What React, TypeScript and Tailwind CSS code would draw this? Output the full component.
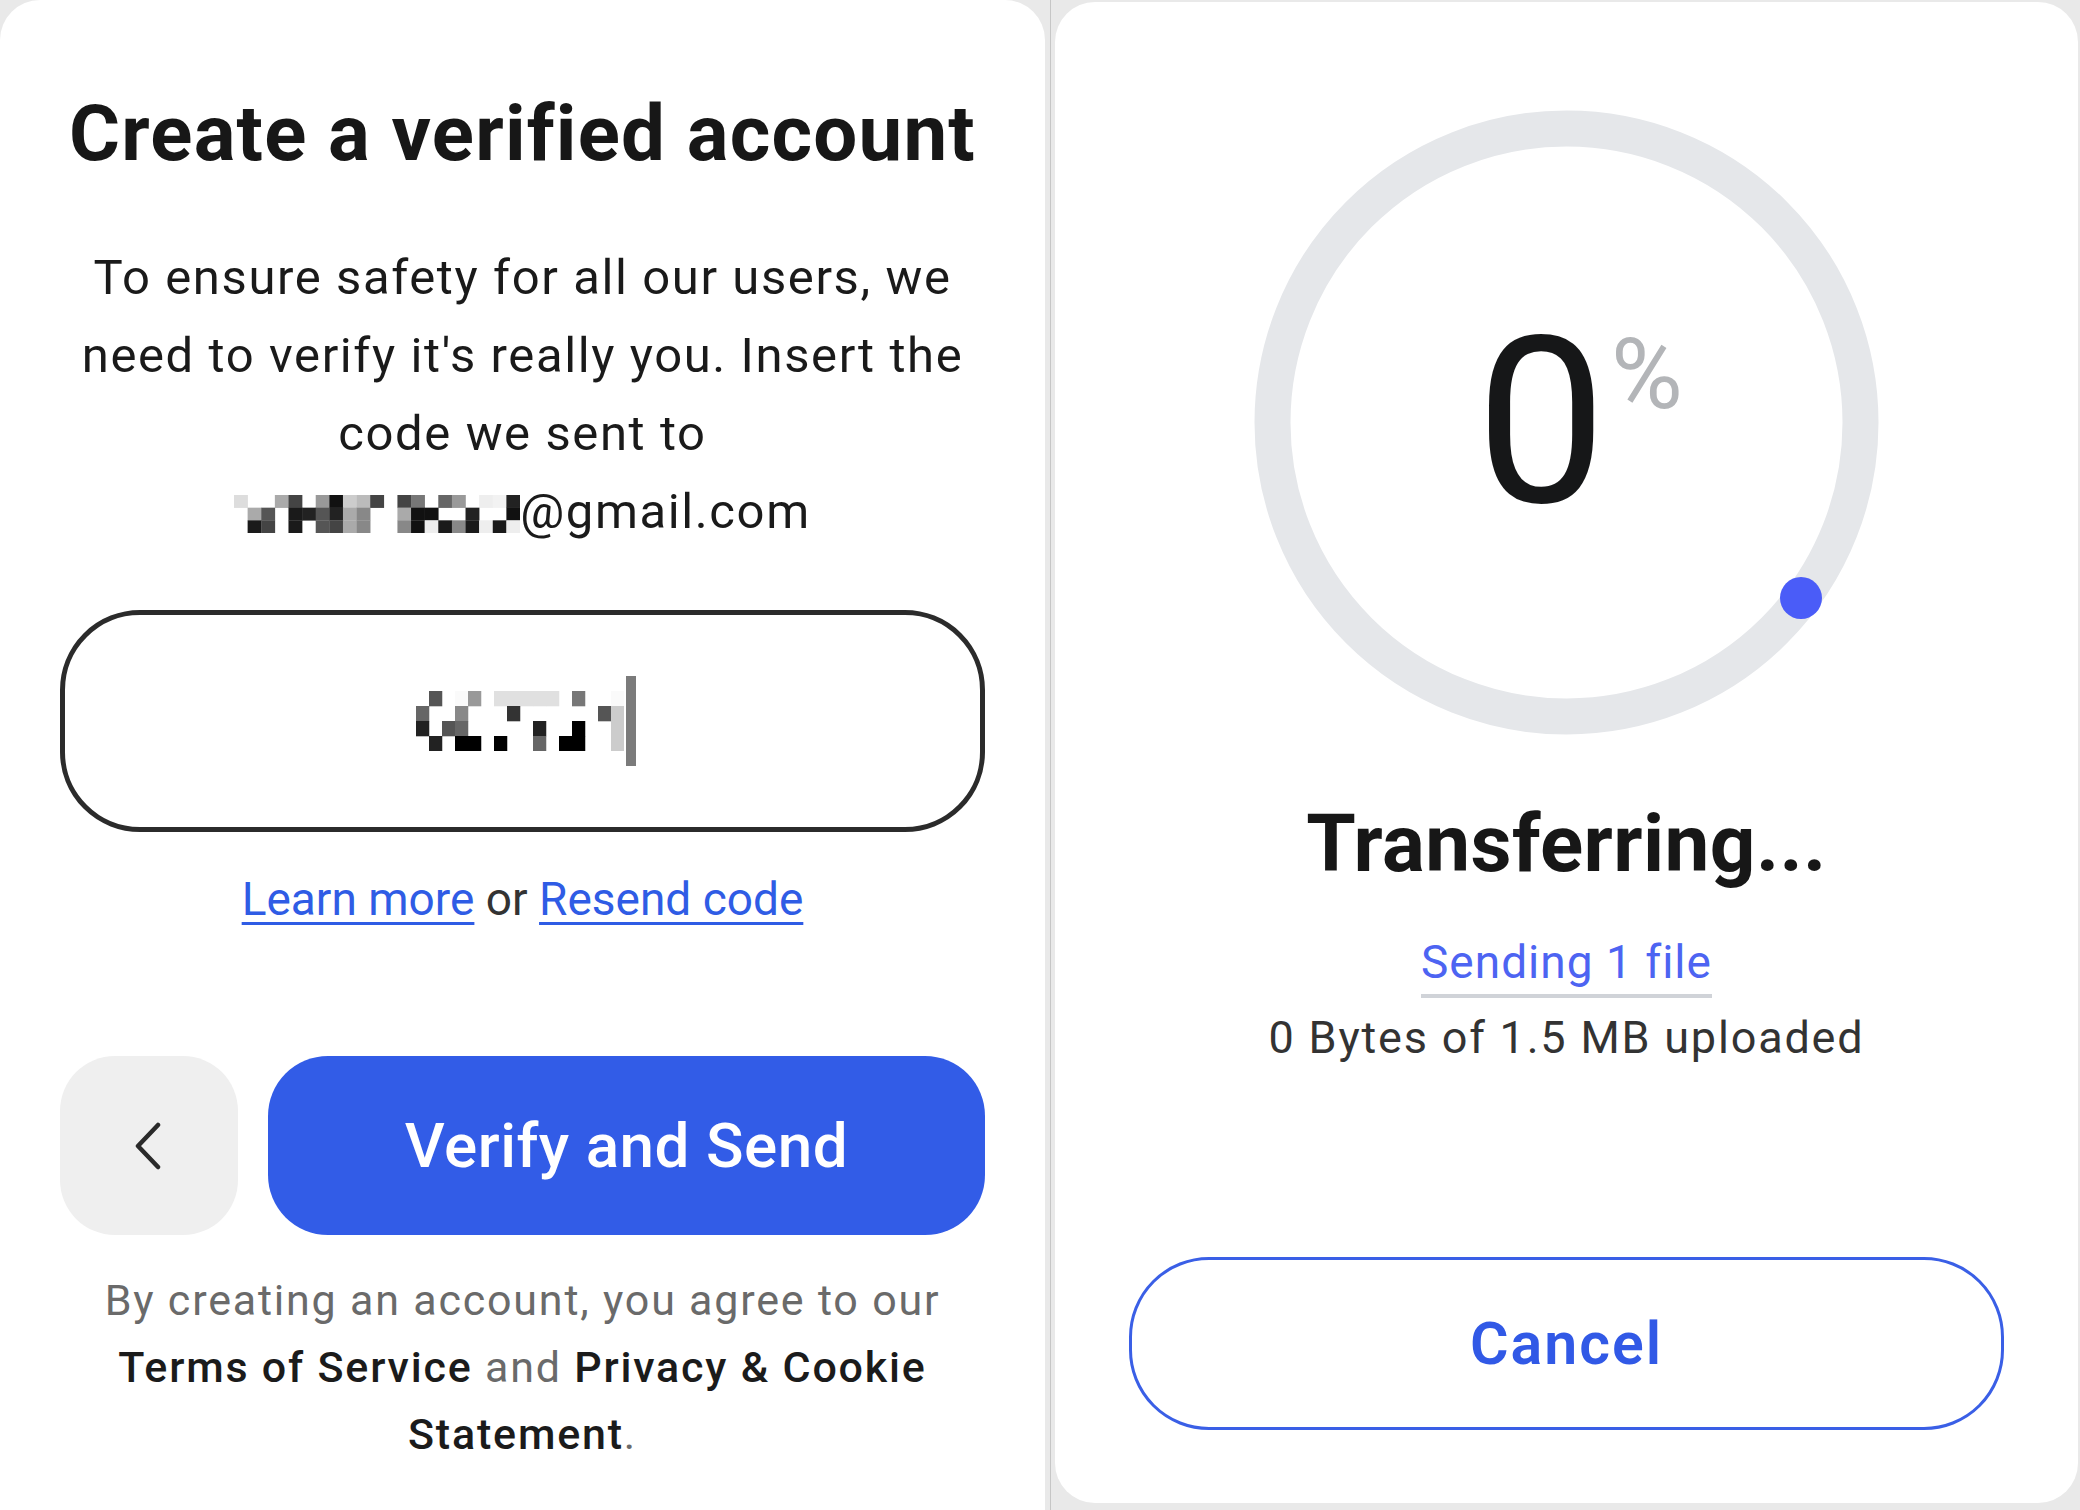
import React from "react";

const FONT = { fontFamily: "Roboto, 'Noto Sans', sans-serif" };

// redacted e-mail prefix (mosaic)
const emailMosaic: string[][] = [
  ["#ddd", "", "", "#aaa", "#444", "", "#999", "#111", "#ccc", "#bbb", "#444", "", "#444", "#777", "", "#666", "#999", "", "#eee", "#f2f2f2", "#222"],
  ["", "#aaa", "#555", "", "#1a1a1a", "#222", "#555", "#222", "#aaa", "#888", "", "", "#aaa", "#111", "#111", "", "", "#222", "", "", "#111"],
  ["", "#1a1a1a", "#444", "", "#1a1a1a", "", "#555", "#444", "#aaa", "#888", "", "", "#888", "#111", "#eee", "#1a1a1a", "#888", "#1a1a1a", "#eee", "#1a1a1a", "#eee"],
];

// redacted code (mosaic)
const codeMosaic: string[][] = [
  ["", "#555", "", "#fafafa", "#999", "", "#e0e0e0", "#e0e0e0", "#e0e0e0", "#e0e0e0", "#e0e0e0", "", "#777", "", "", "#fafafa"],
  ["#666", "", "", "#888", "", "", "", "#333", "", "", "", "", "", "", "#555", "#ccc"],
  ["#222", "", "#555", "#666", "", "", "", "", "", "#222", "", "", "#000", "", "", "#ccc"],
  ["", "#222", "", "#000", "#000", "", "#000", "", "", "#666", "", "#000", "#000", "", "", "#ccc"],
];

function Mosaic({ grid, width, height, className }: { grid: string[][]; width: number; height: number; className?: string }) {
  const cols = grid[0].length;
  const rows = grid.length;
  return (
    <svg
      width={width}
      height={height}
      viewBox={`0 0 ${cols} ${rows}`}
      preserveAspectRatio="none"
      className={className}
    >
      {grid.map((row, y) =>
        row.map((c, x) => (c ? <rect key={`${x}-${y}`} x={x} y={y} width={1.02} height={1.02} fill={c} /> : null))
      )}
    </svg>
  );
}

function VerifyPanel() {
  return (
    <div className="w-[1045px] h-[1560px] shrink-0 rounded-[40px] bg-white flex flex-col items-center pt-[95px] px-[60px] text-[#171717]">
      <h1 className="text-[78px] leading-[78px] font-bold tracking-[1.2px] whitespace-nowrap">
        Create a verified account
      </h1>
      <p className="mt-[66px] text-[49px] leading-[78px] text-center text-[#1a1a1a] tracking-[1.6px] whitespace-nowrap">
        To ensure safety for all our users, we
        <br />
        need to verify it's really you. Insert the
        <br />
        code we sent to
        <br />
        <Mosaic grid={emailMosaic} width={286} height={38} className="inline-block align-[-5px]" />
        @gmail.com
      </p>

      <div className="mt-[59px] w-full h-[222px] border-[5px] border-[#2b2b2b] rounded-[80px] flex items-center justify-center gap-[2px] pl-[6px]">
        <Mosaic grid={codeMosaic} width={208} height={60} />
        <div className="w-[10px] h-[90px] bg-[#7b7b7b]" />
      </div>

      <div className="mt-[39px] text-[46px] leading-[56px] text-[#333]">
        <a className="text-[#2f5ce5] underline decoration-[3px] underline-offset-[7px]">Learn more</a>
        {" or "}
        <a className="text-[#2f5ce5] underline decoration-[3px] underline-offset-[7px]">Resend code</a>
      </div>

      <div className="mt-[129px] w-full h-[179px] flex gap-[30px]">
        <button className="w-[178px] h-full rounded-[55px] bg-[#efefef] flex items-center justify-center">
          <svg width="30" height="48" viewBox="0 0 30 48" fill="none">
            <path d="M24 3 L4 24 L24 45" stroke="#2a2a2a" strokeWidth="4.5" strokeLinecap="round" strokeLinejoin="round" />
          </svg>
        </button>
        <button className="flex-1 h-full rounded-[60px] bg-[#325ce7] text-white text-[62px] leading-[62px] font-medium tracking-[0.5px]">
          Verify and Send
        </button>
      </div>

      <p className="mt-[32px] text-[43px] leading-[67px] text-center text-[#6a6a6a] tracking-[1.8px] whitespace-nowrap">
        By creating an account, you agree to our
        <br />
        <span className="font-medium text-[#1b1b1b]">Terms of Service</span> and{" "}
        <span className="font-medium text-[#1b1b1b]">Privacy &amp; Cookie</span>
        <br />
        <span className="font-medium text-[#1b1b1b]">Statement</span>.
      </p>
    </div>
  );
}

function ProgressRing() {
  return (
    <div className="relative w-[625px] h-[625px]">
      <svg width="625" height="625" viewBox="0 0 625 625" className="absolute inset-0">
        <circle cx="312.5" cy="312.5" r="294" fill="none" stroke="#e5e7ea" strokeWidth="36" />
        <circle cx="547" cy="488" r="21" fill="#4a5cf8" />
      </svg>
      <span className="absolute left-[222px] top-[197px] text-[232px] leading-[232px] text-[#161718]">0</span>
      <span className="absolute left-[357px] top-[216px] text-[98px] leading-[98px] text-[#b3b5b8]">%</span>
    </div>
  );
}

function TransferPanel() {
  return (
    <div className="w-[1023px] h-[1501px] mt-[2px] shrink-0 rounded-[40px] bg-white flex flex-col items-center pt-[108px]">
      <ProgressRing />
      <h2 className="mt-[69px] text-[80px] leading-[80px] font-bold text-[#171717] tracking-[0.4px]">
        Transferring...
      </h2>
      <span className="mt-[50px] inline-block text-[46px] leading-[56px] pb-[4px] border-b-4 border-[#d0d3d8] text-[#4d64f2] tracking-[1px]">
        Sending 1 file
      </span>
      <p className="mt-[12px] text-[45px] leading-[56px] text-[#333] tracking-[1.8px]">0 Bytes of 1.5 MB uploaded</p>
      <button className="mt-[191px] w-[875px] h-[173px] border-[3px] border-[#3a5fe6] rounded-[80px] text-[59px] leading-[59px] font-semibold text-[#3159e6] tracking-[2px]">
        Cancel
      </button>
    </div>
  );
}

export default function App() {
  return (
    <div className="w-[2080px] h-[1510px] overflow-hidden bg-[#e9e9e9] flex" style={FONT}>
      <VerifyPanel />
      <div className="w-[10px] shrink-0 flex justify-center">
        <div className="w-[1px] h-full bg-[#c6c6c6]" />
      </div>
      <TransferPanel />
    </div>
  );
}
